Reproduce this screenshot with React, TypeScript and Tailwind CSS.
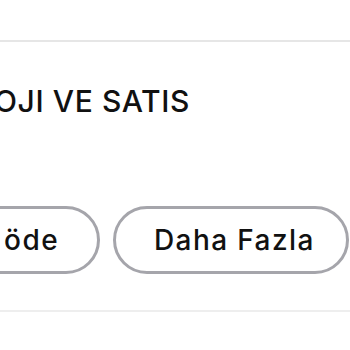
export default function App() {
  return (
    <div className="h-[350px] w-[350px] overflow-hidden bg-white font-['Inter',sans-serif] text-[#111]">
      <div className="mt-[40px] h-[2px] bg-[#e6e6e6]" />

      <div className="mt-[44px] flex w-[190px] justify-end whitespace-nowrap">
        <h2 className="text-[30px] leading-none font-medium tracking-[0.6px]">TEKNOLOJI VE SATIS</h2>
      </div>

      <div className="mt-[90px] flex w-[349px] justify-end gap-[13px] whitespace-nowrap">
        <button className="flex h-[68px] shrink-0 items-center rounded-full border-[3px] border-[#a5a5ab] pr-[38px] pl-[40px] text-[28px] font-medium tracking-[1.4px]">
          Hemen öde
        </button>
        <button className="flex h-[68px] w-[236px] shrink-0 items-center rounded-full border-[3px] border-[#a5a5ab] pl-[38px] text-[28px] font-medium tracking-[1.4px]">
          Daha Fazla
        </button>
      </div>

      <div className="mt-[36px] h-[2px] bg-[#eeeeee]" />
    </div>
  );
}
